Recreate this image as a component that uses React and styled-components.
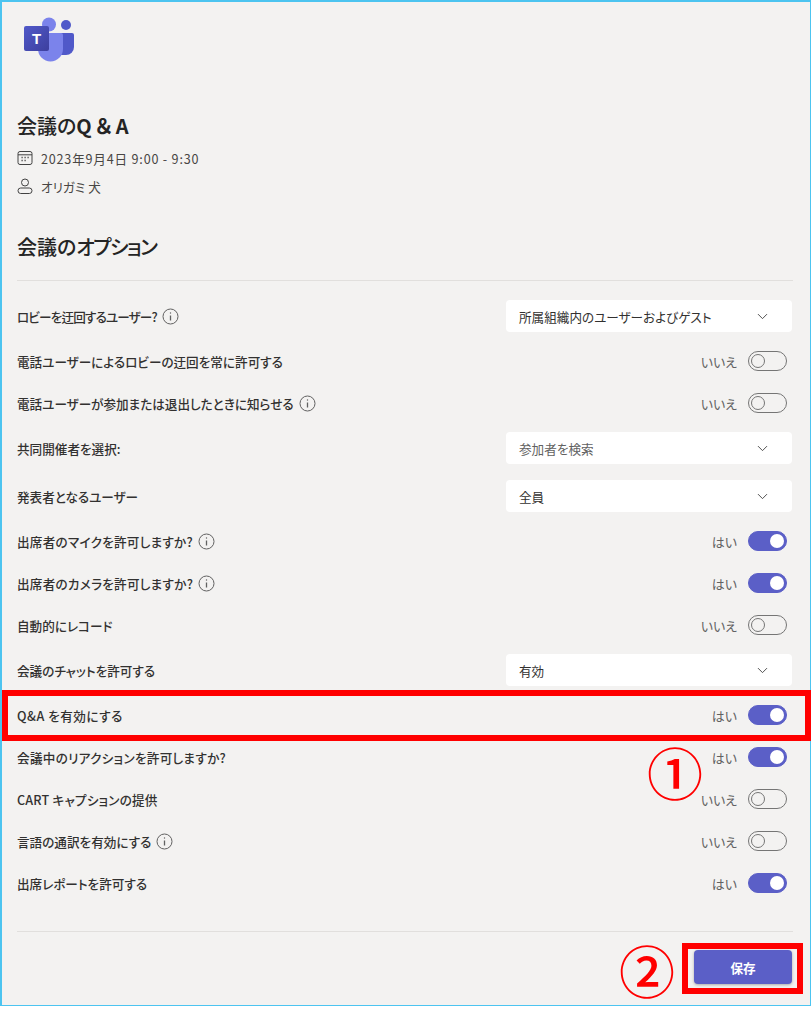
import React from "react";
import styled, { createGlobalStyle } from "styled-components";
import { ChevronDown } from "lucide-react";

const GlobalStyle = createGlobalStyle`
  html, body {
    margin: 0;
    padding: 0;
    background: #fff;
  }
  body {
    font-family: "Noto Sans CJK JP", "Noto Sans", sans-serif;
    font-feature-settings: "palt";
  }
`;

const rows = [
  { label: "ロビーを迂回するユーザー?", info: true, select: "所属組織内のユーザーおよびゲスト", track: -0.85 },
  { label: "電話ユーザーによるロビーの迂回を常に許可する", on: false },
  { label: "電話ユーザーが参加または退出したときに知らせる", info: true, on: false },
  { label: "共同開催者を選択:", select: "参加者を検索", muted: true },
  { label: "発表者となるユーザー", select: "全員" },
  { label: "出席者のマイクを許可しますか?", info: true, on: true, track: 0.25 },
  { label: "出席者のカメラを許可しますか?", info: true, on: true, track: 0.25 },
  { label: "自動的にレコード", on: false },
  { label: "会議のチャットを許可する", select: "有効" },
  { label: "Q&A を有効にする", on: true, track: 0.5 },
  { label: "会議中のリアクションを許可しますか?", on: true, track: 0.3 },
  { label: "CART キャプションの提供", on: false, track: 0.2 },
  { label: "言語の通訳を有効にする", info: true, on: false },
  { label: "出席レポートを許可する", on: true },
];

function TeamsLogo() {
  return (
    <svg width="56" height="50" viewBox="0 0 56 50">
      <defs>
        <linearGradient id="tile" x1="0" y1="0" x2="1" y2="1">
          <stop offset="0" stopColor="#5059c9" />
          <stop offset="1" stopColor="#3d3f9e" />
        </linearGradient>
      </defs>
      <circle cx="43" cy="10" r="5" fill="#5059c9" />
      <path d="M35 18h14a2 2 0 0 1 2 2v12a8 8 0 0 1-8 8h-8z" fill="#5059c9" />
      <circle cx="26" cy="9.500" r="7" fill="#7b83eb" />
      <path d="M15 18h23a2 2 0 0 1 2 2v14a12.500 12.500 0 0 1-25 0z" fill="#7b83eb" />
      <rect x="1" y="11" width="25" height="25" rx="2" fill="url(#tile)" />
      <text x="13.500" y="29" textAnchor="middle" fontSize="15" fontWeight="700" fontFamily="Liberation Sans, sans-serif" fill="#fff">T</text>
    </svg>
  );
}

function CalendarIcon() {
  return (
    <svg width="16" height="16" viewBox="0 0 16 16" fill="none" stroke="#424242">
      <rect x="1" y="1.500" width="14" height="13" rx="2" />
      <path d="M1 4.800h14" />
      <path d="M4.500 7.500h1.200M7.500 7.500h1.200M10.500 7.500h1.200M4.500 10.500h1.200M7.500 10.500h1.200" strokeWidth="1.300" />
    </svg>
  );
}

function PersonIcon() {
  return (
    <svg width="16" height="16" viewBox="0 0 16 16" fill="none" stroke="#424242">
      <circle cx="8" cy="4.500" r="3.500" />
      <rect x="1" y="10" width="14" height="5.500" rx="2.700" />
    </svg>
  );
}

function InfoIcon() {
  return (
    <InfoSvg width="17" height="17" viewBox="0 0 17 17" fill="none" stroke="#616161">
      <circle cx="8.500" cy="8.500" r="7.500" />
      <path d="M8.500 7.500v5" strokeWidth="1.300" />
      <circle cx="8.500" cy="5" r="0.700" fill="#616161" stroke="none" />
    </InfoSvg>
  );
}

export default function App() {
  return (
    <>
      <GlobalStyle />
      <Frame>
        <LogoWrap>
          <TeamsLogo />
        </LogoWrap>
        <Title>会議の<b>Q＆A</b></Title>
        <Meta $first>
          <CalendarIcon />
          <DateText>2023年9月4日 9:00 - 9:30</DateText>
        </Meta>
        <Meta>
          <PersonIcon />
          オリガミ 犬
        </Meta>
        <Heading>会議の<Narrow>オプション</Narrow></Heading>
        <Divider />
        <List>
          {rows.map((row) => (
            <Row key={row.label} $tall={!!row.select}>
              <Label>
                <LabelText $track={row.track}>{row.label}</LabelText>
                {row.info && <InfoIcon />}
              </Label>
              {row.select ? (
                <Select $muted={row.muted}>
                  {row.select}
                  <ChevronDown size={17} strokeWidth={1.3} color="#424242" />
                </Select>
              ) : (
                <ToggleWrap>
                  {row.on ? "はい" : "いいえ"}
                  <Toggle $on={row.on}>
                    <Knob $on={row.on} />
                  </Toggle>
                </ToggleWrap>
              )}
            </Row>
          ))}
        </List>
        <Divider $bottom />
        <Footer>
          <SaveButton>保存</SaveButton>
        </Footer>

        {/* callouts drawn over the page */}
        <RedBox $top={690} $left={2} $width={809} $height={51} />
        <RedBox $top={943} $left={682} $width={121} $height={51} />
        <Callout $top={741} $left={645}>①</Callout>
        <Callout $top={939} $left={617}>②</Callout>
      </Frame>
    </>
  );
}

const Frame = styled.div`
  position: relative;
  box-sizing: border-box;
  width: 811px;
  height: 1006px;
  padding: 0 15px;
  background: #f3f2f1;
  border: 2px solid #4cc4f0;
  border-right-width: 1px;
  border-bottom-width: 1px;
  color: #242424;
`;

const LogoWrap = styled.div`
  padding: 13px 0 0 6px;
  height: 85px;
`;

const Title = styled.h1`
  margin: 12px 0 0;
  font-size: 20px;
  line-height: 28px;
  font-weight: 500;

  b {
    font-weight: 700;
    font-feature-settings: normal;
    letter-spacing: 2px;
  }
`;

const Meta = styled.div`
  display: flex;
  align-items: center;
  gap: 8px;
  height: 28px;
  margin-top: ${(p) => (p.$first ? 4 : 0)}px;
  font-size: 12.600px;
  color: #484644;

  svg {
    flex: none;
  }
`;

const DateText = styled.span`
  letter-spacing: 0.8px;
`;

const Heading = styled.h2`
  margin: 33px 0 0;
  font-size: 20px;
  line-height: 28px;
  font-weight: 500;
`;

const Narrow = styled.span`
  letter-spacing: -1.6px;
`;

const Divider = styled.div`
  height: 1px;
  background: #e1dfdd;
  margin: ${(p) => (p.$bottom ? "27px 0 0" : "19px 0 0")};
  width: 776px;
`;

const List = styled.div`
  display: flex;
  flex-direction: column;
  margin-top: 11px;
  width: 775px;
`;

const Row = styled.div`
  display: flex;
  align-items: center;
  justify-content: space-between;
  height: ${(p) => (p.$tall ? 48 : 42)}px;
`;

const Label = styled.div`
  display: flex;
  align-items: center;
  gap: 5px;
  font-size: 12.600px;
  font-weight: 500;
  color: #323130;
`;

const LabelText = styled.span`
  letter-spacing: ${(p) => p.$track || 0}px;
`;

const InfoSvg = styled.svg`
  flex: none;
`;

const Select = styled.div`
  box-sizing: border-box;
  display: flex;
  align-items: center;
  justify-content: space-between;
  width: 286px;
  height: 32px;
  padding: 0 21px 0 13px;
  background: #fff;
  border-radius: 4px;
  font-size: 12.600px;
  color: ${(p) => (p.$muted ? "#616161" : "#323130")};
`;

const ToggleWrap = styled.div`
  display: flex;
  align-items: center;
  gap: 11px;
  margin-right: 5px;
  font-size: 13px;
  color: #616161;
`;

const Toggle = styled.div`
  box-sizing: border-box;
  display: flex;
  align-items: center;
  justify-content: ${(p) => (p.$on ? "flex-end" : "flex-start")};
  width: 39px;
  height: 20px;
  padding: 0 ${(p) => (p.$on ? 2 : 1.5)}px;
  border-radius: 10px;
  border: 1.300px solid ${(p) => (p.$on ? "#5b5fc7" : "#757575")};
  background: ${(p) => (p.$on ? "#5b5fc7" : "transparent")};
`;

const Knob = styled.div`
  box-sizing: border-box;
  width: 14px;
  height: 14px;
  border-radius: 50%;
  background: ${(p) => (p.$on ? "#fff" : "transparent")};
  border: ${(p) => (p.$on ? "none" : "1.300px solid #757575")};
`;

const Footer = styled.div`
  display: flex;
  justify-content: flex-end;
  margin-top: 18px;
  width: 775px;
`;

const SaveButton = styled.button`
  width: 98px;
  height: 34px;
  border: none;
  border-radius: 4px;
  background: #5b5fc7;
  color: #fff;
  font-family: inherit;
  font-size: 12.600px;
  font-weight: 700;
  box-shadow: 0 1px 3px rgba(0, 0, 0, 0.3);
`;

const RedBox = styled.div`
  position: absolute;
  box-sizing: border-box;
  top: ${(p) => p.$top - 2}px;
  left: ${(p) => p.$left - 2}px;
  width: ${(p) => p.$width}px;
  height: ${(p) => p.$height}px;
  border: 6px solid #ff0000;
`;

const Callout = styled.div`
  position: absolute;
  top: ${(p) => p.$top}px;
  left: ${(p) => p.$left}px;
  font-size: 56px;
  font-weight: 500;
  line-height: 56px;
  color: #ff0000;
`;
